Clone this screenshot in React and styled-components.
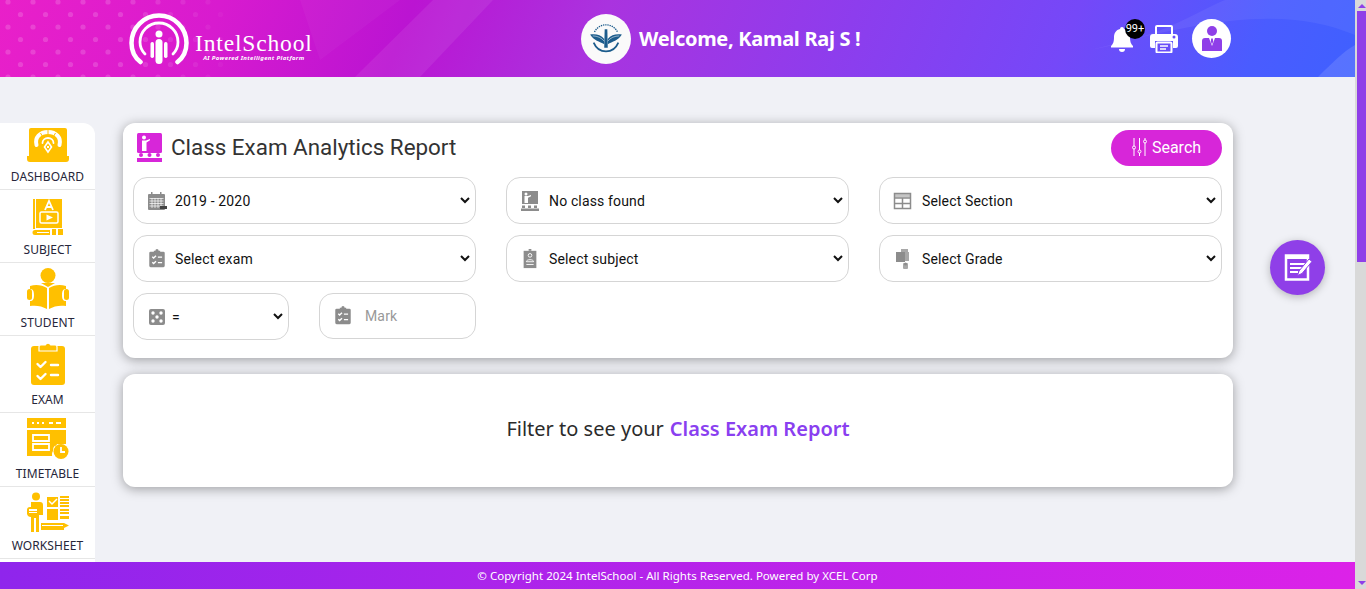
import styled, { createGlobalStyle } from 'styled-components';

const GlobalStyle = createGlobalStyle`
  html, body {
    margin: 0;
    height: 100%;
    overflow: hidden;
    background: #f0f1f6;
  }
  *, *::before, *::after {
    box-sizing: border-box;
  }
`;

const Shell = styled.div`
  display: flex;
  height: 100vh;
  font-family: Roboto, sans-serif;
`;

const Page = styled.div`
  position: relative;
  flex: 1;
  min-width: 0;
  overflow: hidden;
`;

const ScrollTrack = styled.div`
  flex: 0 0 11px;
  display: flex;
  flex-direction: column;
  align-items: flex-end;
  background: #d9d9d9;
`;

const ScrollArrow = styled.div`
  width: 9px;
  height: 11px;
  display: flex;
  justify-content: center;
  padding-top: 4px;
  margin-top: ${(p) => (p.$down ? 'auto' : '0')};
  margin-bottom: ${(p) => (p.$down ? '1px' : '0')};
  &::before {
    content: '';
    height: 0;
    border-left: 4px solid transparent;
    border-right: 4px solid transparent;
    ${(p) => (p.$down ? 'border-top' : 'border-bottom')}: 4px solid #8f3fe8;
  }
`;

const ScrollThumb = styled.div`
  width: 9px;
  height: 251px;
  background: #8f3fe8;
`;

const Header = styled.header`
  position: relative;
  height: 77px;
  display: grid;
  grid-template-columns: 452px 529px auto;
  align-items: center;
  padding-left: 129px;
  overflow: hidden;
  background: linear-gradient(112deg, #e920c9 0%, #d81bcf 16%, #bb14d2 30%, #aa33df 44%, #8d3ded 62%, #7548f8 78%, #4a5cff 92%, #3f60ff 100%);
`;

const HeaderArt = styled.svg`
  position: absolute;
  inset: 0;
  width: 100%;
  height: 100%;
`;

const Logo = styled.div`
  position: relative;
  display: flex;
  align-items: flex-start;
  gap: 6px;
`;

const LogoText = styled.div`
  display: flex;
  flex-direction: column;
  align-items: center;
  padding-top: 19px;
  color: #fff;
`;

const LogoName = styled.span`
  font-family: 'Liberation Serif', serif;
  font-size: 23.5px;
  line-height: 23px;
  letter-spacing: 0.85px;
`;

const LogoTag = styled.span`
  font-family: 'Noto Sans', sans-serif;
  font-size: 6px;
  font-weight: 700;
  font-style: italic;
  line-height: 7px;
  letter-spacing: 0.35px;
`;

const Welcome = styled.div`
  position: relative;
  display: flex;
  align-items: center;
  gap: 8px;
  height: 50px;
`;

const Emblem = styled.div`
  width: 50px;
  height: 50px;
  border-radius: 50%;
  background: #fafafa;
  display: flex;
  align-items: center;
  justify-content: center;
`;

const WelcomeText = styled.span`
  font-family: 'Noto Sans', sans-serif;
  font-size: 20px;
  font-weight: 700;
  letter-spacing: -0.3px;
  color: #fff;
`;

const Actions = styled.div`
  position: relative;
  display: flex;
  align-items: center;
`;

const BellWrap = styled.div`
  position: relative;
  width: 40px;
  height: 26px;
`;

const Badge = styled.span`
  position: absolute;
  left: 15px;
  top: -7px;
  width: 20px;
  height: 20px;
  border-radius: 50%;
  background: #000;
  color: #fff;
  font-size: 11px;
  line-height: 20px;
  text-align: center;
`;

const Avatar = styled.div`
  width: 39px;
  height: 39px;
  margin-left: 14px;
  border-radius: 50%;
  background: #fff;
  display: flex;
  align-items: center;
  justify-content: center;
`;

const Body = styled.div`
  display: flex;
  align-items: flex-start;
  gap: 28px;
  padding-top: 46px;
`;

const Sidebar = styled.nav`
  flex: 0 0 95px;
  height: 466px;
  background: #fff;
  border-top-right-radius: 12px;
  overflow: hidden;
`;

const NavItem = styled.a`
  display: flex;
  flex-direction: column;
  align-items: center;
  gap: 6px;
  padding: 5px 0 4px;
  border-bottom: 1px solid #e6e6e6;
`;

const NavLabel = styled.span`
  font-family: 'Noto Sans', sans-serif;
  font-size: 12px;
  line-height: 16px;
  color: #26263a;
  letter-spacing: 0.1px;
`;

const Content = styled.main`
  flex: 0 0 1110px;
  display: flex;
  flex-direction: column;
  gap: 16px;
`;

const Card = styled.section`
  background: #fff;
  border-radius: 12px;
  box-shadow: 0 2px 12px rgba(0, 0, 0, 0.35);
`;

const FilterCard = styled(Card)`
  height: 235px;
  padding: 7px 11px 0 10px;
`;

const CardHead = styled.div`
  display: flex;
  align-items: center;
  justify-content: space-between;
  height: 36px;
  margin-bottom: 11px;
`;

const Title = styled.h1`
  display: flex;
  align-items: center;
  gap: 9px;
  margin: 0 0 1px;
  padding-left: 4px;
  font-size: 22.4px;
  line-height: 28px;
  font-weight: 400;
  color: #333;
`;

const TitleText = styled.span`
  margin-top: -2px;
`;

const SearchButton = styled.button`
  width: 111px;
  height: 36px;
  display: flex;
  align-items: center;
  justify-content: center;
  gap: 5px;
  padding: 0 0 2px;
  border: 0;
  border-radius: 18px;
  background: #d726d9;
  color: #fff;
  font-family: Roboto, sans-serif;
  font-size: 16px;
`;

const FilterGrid = styled.div`
  display: grid;
  grid-template-columns: repeat(3, 343px);
  gap: 11px 30px;
`;

const SplitCell = styled.div`
  display: grid;
  grid-template-columns: 156px 157px;
  gap: 30px;
`;

const Field = styled.label`
  height: ${(p) => p.$height || 47}px;
  display: flex;
  align-items: center;
  padding: 0 2px 0 13px;
  border: 1px solid #d5d5d5;
  border-radius: 14px;
  background: #fff;
`;

const FieldIcon = styled.svg`
  flex: 0 0 20px;
  width: 20px;
  height: 20px;
`;

const Select = styled.select`
  flex: 1;
  min-width: 0;
  height: 100%;
  margin-left: ${(p) => p.$indent || 4}px;
  border: 0;
  outline: 0;
  background: transparent;
  font-family: Roboto, sans-serif;
  font-size: 14px;
  letter-spacing: 0.15px;
  color: #111;
`;

const MarkInput = styled.input`
  flex: 1;
  min-width: 0;
  margin-left: 10px;
  border: 0;
  outline: 0;
  background: transparent;
  font-family: Roboto, sans-serif;
  font-size: 14px;
  letter-spacing: 0.15px;
  &::placeholder {
    color: #999;
  }
`;

const EmptyCard = styled(Card)`
  height: 113px;
  padding-bottom: 4px;
  display: flex;
  align-items: center;
  justify-content: center;
  font-family: 'Noto Sans', sans-serif;
  font-size: 20px;
  color: #2b2b2b;
  gap: 6px;
`;

const EmptyLink = styled.span`
  color: #8a3ff0;
  font-weight: 600;
`;

const Fab = styled.button`
  position: absolute;
  left: 1270px;
  top: 240px;
  width: 55px;
  height: 55px;
  display: flex;
  align-items: center;
  justify-content: center;
  border: 0;
  border-radius: 50%;
  background: #8f3fe8;
  box-shadow: 0 2px 8px rgba(0, 0, 0, 0.25);
`;

const Footer = styled.footer`
  position: absolute;
  left: 0;
  right: 0;
  bottom: 0;
  height: 27px;
  display: flex;
  align-items: center;
  justify-content: center;
  background: linear-gradient(90deg, #8f25ec 0%, #dc22e8 100%);
  color: #fff;
  font-family: 'Noto Sans', sans-serif;
  font-size: 11.5px;
  letter-spacing: 0.03px;
`;

const gold = '#ffc000';
const grey = '#8c8c8c';

const ClipboardShape = ({ fill, mark }) => (
  <>
    <path fill={fill} d="M3 3h3.500V1.800h1.700a1.800 1.800 0 0 1 3.600 0h1.700V3H17a1.500 1.500 0 0 1 1.500 1.500v14A1.500 1.500 0 0 1 17 20H3a1.500 1.500 0 0 1-1.500-1.500v-14A1.500 1.500 0 0 1 3 3z" />
    <path fill="none" stroke={mark} strokeWidth="1.500" d="M4.800 8.500l1.500 1.500 2.600-2.600M4.800 14.500l1.500 1.500 2.600-2.600M11 9h4.600M11 15h4.600" />
  </>
);

const DashboardIcon = () => (
  <svg width="42" height="35" viewBox="0 0 42 35">
    <path fill={gold} d="M4 0h34a2 2 0 0 1 2 2v28H2V2a2 2 0 0 1 2-2z" />
    <path fill={gold} d="M0 28h15v2h12v-2h15v3a3 3 0 0 1-3 3H3a3 3 0 0 1-3-3z" />
    <path fill="none" stroke="#fff" strokeWidth="4" strokeLinecap="round" d="M9.500 17C7.500 9.500 13 4 21 4s13.500 5.500 11.500 13" />
    <path fill="none" stroke={gold} strokeWidth="1" d="M13.500 5l2 3.500M21 1.500v4.500M28.500 5l-2 3.500" />
    <path fill="none" stroke="#fff" strokeWidth="1.800" strokeLinecap="round" d="M15.500 15c0-3 2.500-5 5.500-5s5.500 2 5.500 5" />
    <path fill="none" stroke="#fff" strokeWidth="1.600" d="M21 14l3.500 5-3.500 5-3.500-5z" />
    <path fill="#fff" d="M20 18h2v2h-2z" />
  </svg>
);

const SubjectIcon = () => (
  <svg width="32" height="41" viewBox="0 -2 32 41">
    <path fill={gold} d="M1 2h2v30H1zM4 2h26v29H4z" />
    <path fill="none" stroke="#fff" strokeWidth="1.500" d="M9.500 15h15a1.500 1.500 0 0 1 1.500 1.500v8a1.500 1.500 0 0 1-1.500 1.500h-15A1.500 1.500 0 0 1 8 24.500v-8A1.500 1.500 0 0 1 9.500 15z" />
    <path fill="#fff" d="M14.500 17.500l6.500 3-6.500 3z" />
    <path fill="none" stroke="#fff" strokeWidth="1.800" d="M13 13l4-9 4 9M14.500 10h5" />
    <path fill={gold} d="M3 33h15v5H3a2.500 2.500 0 0 1 0-5zM20 32h4v6h-4zM26 32h5v6h-5z" />
    <path fill="#fff" d="M5 35h12v1H5z" />
  </svg>
);

const StudentIcon = () => (
  <svg width="42" height="41" viewBox="0 0 42 41">
    <circle cx="21" cy="7.500" r="7.500" fill={gold} />
    <path fill={gold} d="M3 18c6-2 12-1 17 2v21c-5-3-11-4-17-3v-5c3 0 4-2 4-6s-1-6-4-6zM39 18c-6-2-12-1-17 2v21c5-3 11-4 17-3v-5c-3 0-4-2-4-6s1-6 4-6z" />
    <rect x="0" y="21" width="5" height="11" rx="2.500" fill={gold} />
    <rect x="37" y="21" width="5" height="11" rx="2.500" fill={gold} />
    <path fill={gold} d="M14 15h14l-7 4z" />
  </svg>
);

const ExamIcon = () => (
  <svg width="34" height="45" viewBox="0 0 34 45">
    <path fill={gold} d="M3 5h28a3 3 0 0 1 3 3v33a3 3 0 0 1-3 3H3a3 3 0 0 1-3-3V8a3 3 0 0 1 3-3z" />
    <path fill={gold} stroke="#fff" strokeWidth="1.200" d="M8 10V6a2 2 0 0 1 2-2h4.200a3 3 0 0 1 5.600 0H24a2 2 0 0 1 2 2v4z" />
    <path fill="none" stroke="#fff" strokeWidth="2.400" strokeLinecap="round" strokeLinejoin="round" d="M6.500 23l3 3 5-5M6.500 35l3 3 5-5M20 24h7M20 34h7" />
  </svg>
);

const TimetableIcon = () => (
  <svg width="42" height="42" viewBox="0 0 42 42">
    <rect x="0" y="0" width="39" height="10" fill={gold} />
    <path fill="#fff" d="M5 4h2v2H5zM10 4h2v2h-2zM15 4h2v2h-2zM22 4h4v2h-4zM29 4h5v2h-5z" />
    <path fill={gold} d="M0 12h39v14h-9a8 8 0 0 0-4 8v4H0z" />
    <path fill="none" stroke="#fff" strokeWidth="1.800" d="M6 17h16v6H6zM6 26h16v6H6z" />
    <path fill="none" stroke="#fff" strokeWidth="2" d="M26 37a8 8 0 1 0 0-.1" />
    <circle cx="34" cy="33.500" r="7.500" fill={gold} />
    <path fill="none" stroke="#fff" strokeWidth="1.800" d="M34 29v5h4" />
    <path fill={gold} d="M25 25l3-1 2 3-2 1z" />
  </svg>
);

const WorksheetIcon = () => (
  <svg width="42" height="40" viewBox="0 0 42 40">
    <circle cx="9" cy="4.500" r="4" fill={gold} />
    <path fill={gold} d="M4 10h9a3 3 0 0 1 3 3v10h-4v17H9V26H7v14H4V25a4 4 0 0 1-4-3v-4a3 3 0 0 1 3-3h7v7H4z" />
    <path fill="#fff" d="M2 17h8v2H2zM2 20h8v1H2z" />
    <path fill={gold} d="M20 5h11v10H20zM20 17h11v11H20z" />
    <path fill="none" stroke="#fff" strokeWidth="1.500" d="M22 9l3 3 5-5" />
    <path fill={gold} d="M33 4h9v2h-9zM33 7h9v2h-9zM33 10h9v2h-9zM33 13h9v2h-9zM33 17h9v2h-9zM33 20h9v2h-9zM33 24h9v3h-9z" />
    <path fill={gold} d="M14 31h23l5 2.500-5 2.500v2H14z" />
    <path fill="#fff" d="M15 33h21v1H15z" />
  </svg>
);

const CalendarIcon = () => (
  <FieldIcon viewBox="0 0 20 20">
    <rect x="1" y="3" width="17" height="16" rx="1" fill={grey} />
    <path fill={grey} d="M4 1h1.500v3H4zM13 1h1.500v3H13z" />
    <path stroke="#fff" strokeWidth="0.700" d="M2.500 7.500h14M2.500 10h14M2.500 12.500h14M2.500 15h14M5 7v10M8 7v10M11 7v10M14 7v10" />
    <path fill="#444" d="M13 15h7v3h-7z" />
  </FieldIcon>
);

const ClassIcon = () => (
  <FieldIcon viewBox="0 0 20 20">
    <path fill={grey} d="M2 0h16v13H2z" />
    <circle cx="6" cy="3" r="1.500" fill="#fff" />
    <path fill="#fff" d="M4.500 5H8l3-1v1.200L8 6.800V12H4.500z" />
    <path fill={grey} d="M2 14.500h3v2.500H2zM8 14.500h3v2.500H8zM14 14.500h3v2.500h-3zM1 17.500h18V20H1z" />
  </FieldIcon>
);

const TableIcon = () => (
  <FieldIcon viewBox="0 0 20 20">
    <rect x="1.500" y="2.500" width="16" height="15" fill="none" stroke={grey} strokeWidth="1.500" />
    <path fill={grey} d="M1.500 2.500h16v4h-16z" opacity="0.5" />
    <path stroke={grey} strokeWidth="1.500" d="M1.500 7h16M1.500 12.500h16M9.500 7v10.500" />
  </FieldIcon>
);

const ClipboardIcon = () => (
  <FieldIcon viewBox="0 0 20 22">
    <ClipboardShape fill={grey} mark="#fff" />
  </FieldIcon>
);

const BadgeIcon = () => (
  <FieldIcon viewBox="0 0 20 22">
    <path fill={grey} d="M3 2h14v19H3z" />
    <path fill={grey} d="M8.500 0h3v2h-3z" />
    <circle cx="10" cy="7" r="2" fill="none" stroke="#fff" />
    <path fill="none" stroke="#fff" d="M6 14c0-3 8-3 8 0zM6 17h8" />
  </FieldIcon>
);

const GradeIcon = () => (
  <FieldIcon viewBox="0 0 20 20">
    <path fill="#a8a8a8" d="M8 0h7v3h1v9H8z" />
    <path fill={grey} d="M3 3h9v10H3z" />
    <rect x="10" y="14" width="5" height="6" rx="1" fill="#a8a8a8" />
    <circle cx="12.500" cy="15" r="1.500" fill={grey} />
  </FieldIcon>
);

const DiceIcon = () => (
  <FieldIcon viewBox="0 0 20 20">
    <rect x="2" y="2" width="16" height="16" rx="2" fill={grey} />
    <g fill="#fff">
      <circle cx="6" cy="6" r="1.700" />
      <circle cx="14" cy="6" r="1.700" />
      <circle cx="10" cy="10" r="1.700" />
      <circle cx="6" cy="14" r="1.700" />
      <circle cx="14" cy="14" r="1.700" />
    </g>
  </FieldIcon>
);

const HeaderDecor = () => (
  <HeaderArt viewBox="0 0 1355 77" preserveAspectRatio="none">
    <defs>
      <pattern id="dots" width="25" height="25" patternUnits="userSpaceOnUse" x="4" y="-1">
        <circle cx="4" cy="3" r="2.600" fill="#fff" opacity="0.16" />
        <circle cx="16.500" cy="15.500" r="2.600" fill="#fff" opacity="0.16" />
      </pattern>
      <linearGradient id="fade">
        <stop offset="0.55" stopColor="#fff" />
        <stop offset="1" stopColor="#333" />
      </linearGradient>
      <mask id="dotMask">
        <rect width="225" height="77" fill="url(#fade)" />
      </mask>
    </defs>
    <rect width="225" height="77" fill="url(#dots)" mask="url(#dotMask)" />
    <path d="M355 77L433 0h60L420 77z" fill="#fff" opacity="0.07" />
    <path d="M300 0h100L320 60z" fill="#fff" opacity="0.03" />
    <path d="M1090 50c70-12 110-40 135-50h130v35c-70-30-150-15-265 15z" fill="#fff" opacity="0.06" />
    <path d="M1318 77c15-15 25-25 37-32v32z" fill="#fff" opacity="0.12" />
  </HeaderArt>
);

const LogoMark = () => (
  <svg width="60" height="52" viewBox="0 0 60 52">
    <g fill="none" stroke="#fff" strokeLinecap="round">
      <path strokeWidth="4.500" d="M11.500 49C5 44 2.500 37 2.500 30a27.500 27.500 0 0 1 55 0c0 7-2.500 14-9 19" />
      <path strokeWidth="2.800" d="M16 41c-3-3-5-7-5-12a19 19 0 0 1 38 0c0 5-2 9-5 12" />
    </g>
    <circle cx="30" cy="21" r="3.500" fill="#fff" />
    <rect x="26.500" y="26" width="7" height="25" rx="3.500" fill="#fff" />
    <rect x="21.500" y="29" width="3.500" height="16" rx="1.700" fill="#fff" />
    <rect x="35" y="29" width="3.500" height="16" rx="1.700" fill="#fff" />
  </svg>
);

const SchoolEmblem = () => (
  <svg width="34" height="30" viewBox="0 0 38 34">
    <path fill="none" stroke="#1c5c8c" strokeWidth="1.500" strokeDasharray="1.500 1" d="M6 9a14.500 14.500 0 0 1 26 0" />
    <path fill="#1c5c8c" d="M1 12c6-1 12 0 16 5v6C12 20 5 19 1 12zM37 12c-6-1-12 0-16 5v6c5-3 12-4 16-11z" />
    <path fill="#1c5c8c" d="M17.500 6h3L21 27h-4z" />
    <path fill="none" stroke="#1c5c8c" strokeWidth="2" d="M5 21c3 7 9 10 14 10s11-3 14-10" />
    <path fill="none" stroke="#fff" strokeWidth="0.600" d="M4 13.500c5 0 10 2 13 6M34 13.500c-5 0-10 2-13 6" />
  </svg>
);

const App = () => (
  <Shell>
    <GlobalStyle />
    <Page>
      <Header>
        <HeaderDecor />
        <Logo>
          <LogoMark />
          <LogoText>
            <LogoName>IntelSchool</LogoName>
            <LogoTag>AI Powered Intelligent Platform</LogoTag>
          </LogoText>
        </Logo>
        <Welcome>
          <Emblem>
            <SchoolEmblem />
          </Emblem>
          <WelcomeText>Welcome, Kamal Raj S !</WelcomeText>
        </Welcome>
        <Actions>
          <BellWrap>
            <svg width="24" height="26" viewBox="0 0 24 26">
              <path fill="#fff" d="M12 1a2 2 0 0 1 2 2c4 1 6 4 6 8 0 5 1 7 3 9v1.500H1V20c2-2 3-4 3-9 0-4 2-7 6-8a2 2 0 0 1 2-2z" />
              <path fill="#fff" d="M9 23h6a3 3 0 0 1-6 0z" />
            </svg>
            <Badge>99+</Badge>
          </BellWrap>
          <svg width="28" height="28" viewBox="0 0 28 28">
            <path fill="none" stroke="#fff" strokeWidth="2" d="M6 10V2a1 1 0 0 1 1-1h14a1 1 0 0 1 1 1v8" />
            <path fill="#fff" d="M3 9h22a3 3 0 0 1 3 3v9a2 2 0 0 1-2 2h-3v-7H5v7H2a2 2 0 0 1-2-2v-9a3 3 0 0 1 3-3z" />
            <circle cx="24" cy="12" r="1.500" fill="#6a4ef8" />
            <rect x="6.500" y="17.500" width="15" height="10" rx="1" fill="#6a4ef8" stroke="#fff" strokeWidth="2" />
            <path stroke="#fff" strokeWidth="1.500" d="M10 21h8M10 24h6" />
          </svg>
          <Avatar>
            <svg width="20" height="25" viewBox="0 0 20 25">
              <circle cx="10" cy="5" r="5" fill="#8f3fe8" />
              <path fill="#8f3fe8" d="M3 12h14a3 3 0 0 1 3 3v10H0V15a3 3 0 0 1 3-3z" />
              <path fill="#fff" d="M7 12h6l-3 8z" />
              <path fill="#8f3fe8" d="M9.200 12.500h1.600l.4 3-1.200 3-1.200-3z" />
            </svg>
          </Avatar>
        </Actions>
      </Header>
      <Body>
        <Sidebar>
          <NavItem><DashboardIcon /><NavLabel>DASHBOARD</NavLabel></NavItem>
          <NavItem><SubjectIcon /><NavLabel>SUBJECT</NavLabel></NavItem>
          <NavItem><StudentIcon /><NavLabel>STUDENT</NavLabel></NavItem>
          <NavItem><ExamIcon /><NavLabel>EXAM</NavLabel></NavItem>
          <NavItem><TimetableIcon /><NavLabel>TIMETABLE</NavLabel></NavItem>
          <NavItem><WorksheetIcon /><NavLabel>WORKSHEET</NavLabel></NavItem>
        </Sidebar>
        <Content>
          <FilterCard>
            <CardHead>
              <Title>
                <svg width="25" height="29" viewBox="0 0 25 29">
                  <rect x="0" y="0" width="25" height="20" rx="1.500" fill="#d726d9" />
                  <circle cx="7" cy="4.500" r="2" fill="#fff" />
                  <path fill="#fff" d="M5 7.500h4l4-1.500v1.300L9.500 9.500V18H5z" />
                  <g fill="#d726d9">
                    <circle cx="4" cy="22" r="2" />
                    <circle cx="12.500" cy="22" r="2" />
                    <circle cx="21" cy="22" r="2" />
                    <path d="M0 25h25v4H0z" />
                  </g>
                </svg>
                <TitleText>Class Exam Analytics Report</TitleText>
              </Title>
              <SearchButton>
                <svg width="15" height="18" viewBox="0 0 15 18">
                  <g stroke="#fff" strokeWidth="1" fill="none">
                    <path d="M2 0v8M2 11v7M7.500 0v12M7.500 15v3M13 0v2M13 5v13" />
                    <circle cx="2" cy="9.500" r="1.500" />
                    <circle cx="7.500" cy="13.500" r="1.500" />
                    <circle cx="13" cy="3.500" r="1.500" />
                  </g>
                </svg>
                Search
              </SearchButton>
            </CardHead>
            <FilterGrid>
              <Field>
                <CalendarIcon />
                <Select $indent={4} defaultValue="2019 - 2020"><option>2019 - 2020</option></Select>
              </Field>
              <Field>
                <ClassIcon />
                <Select $indent={5} defaultValue="No class found"><option>No class found</option></Select>
              </Field>
              <Field>
                <TableIcon />
                <Select $indent={5} defaultValue="Select Section"><option>Select Section</option></Select>
              </Field>
              <Field>
                <ClipboardIcon />
                <Select $indent={4} defaultValue="Select exam"><option>Select exam</option></Select>
              </Field>
              <Field>
                <BadgeIcon />
                <Select $indent={5} defaultValue="Select subject"><option>Select subject</option></Select>
              </Field>
              <Field>
                <GradeIcon />
                <Select $indent={5} defaultValue="Select Grade"><option>Select Grade</option></Select>
              </Field>
              <SplitCell>
                <Field>
                  <DiceIcon />
                  <Select $indent={1} defaultValue="="><option>=</option></Select>
                </Field>
                <Field $height={46}>
                  <ClipboardIcon />
                  <MarkInput placeholder="Mark" />
                </Field>
              </SplitCell>
            </FilterGrid>
          </FilterCard>
          <EmptyCard>
            Filter to see your <EmptyLink>Class Exam Report</EmptyLink>
          </EmptyCard>
        </Content>
      </Body>
      <Fab>
        <svg width="28" height="27" viewBox="0 0 28 27">
          <path fill="none" stroke="#fff" strokeWidth="2.500" d="M2 1.500h22v24H2z" />
          <path fill="#fff" d="M2 1.500h22V5H2z" />
          <path stroke="#fff" strokeWidth="1.800" d="M6 10h15M6 14h12M6 18h8" />
          <path fill="#fff" stroke="#8f3fe8" d="M25 5l3 2.500-10 12-4.500 2 1.500-4.500z" />
        </svg>
      </Fab>
      <Footer>© Copyright 2024 IntelSchool - All Rights Reserved. Powered by XCEL Corp</Footer>
    </Page>
    <ScrollTrack>
      <ScrollArrow />
      <ScrollThumb />
      <ScrollArrow $down />
    </ScrollTrack>
  </Shell>
);

export default App;
